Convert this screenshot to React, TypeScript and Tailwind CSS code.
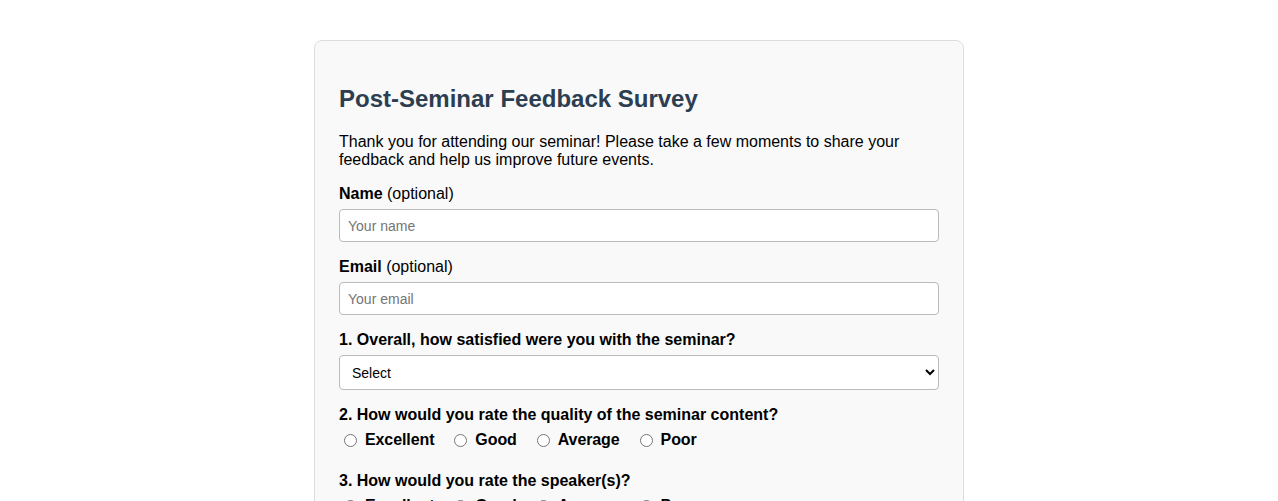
import React, { useState } from 'react';

const RATINGS = ['Excellent', 'Good', 'Average', 'Poor'];

const RadioRow: React.FC<{ name: string; value: string; onChange: (v: string) => void }> = ({ name, value, onChange }) => (
  <div className="flex items-center h-[18px] mt-[7px]">
    {RATINGS.map((r) => (
      <label key={r} className="flex items-center font-bold text-[16px] leading-[18px] mr-[15px] cursor-pointer tracking-[-0.1px]">
        <input
          type="radio"
          name={name}
          value={r}
          checked={value === r}
          onChange={() => onChange(r)}
          className="ml-[5px] mr-[8px] w-[13px] h-[13px]"
        />
        {r}
      </label>
    ))}
  </div>
);

const App: React.FC = () => {
  const [name, setName] = useState('');
  const [email, setEmail] = useState('');
  const [satisfaction, setSatisfaction] = useState('');
  const [content, setContent] = useState('');
  const [speaker, setSpeaker] = useState('');

  return (
    <div className="min-h-screen bg-white pt-[40px] text-[#000] font-['Liberation_Sans',Arial,sans-serif]">
      <div className="mx-auto w-[650px] bg-[#f9f9f9] border border-[#ddd] rounded-[8px] px-[24px] pt-[44px] pb-[24px]">
        <h2 className="text-[24px] leading-[28px] font-bold text-[#2c3e50]">Post-Seminar Feedback Survey</h2>

        <p className="mt-[20px] text-[16px] leading-[18px]">
          Thank you for attending our seminar! Please take a few moments to share your feedback and help us improve future events.
        </p>

        {/* Name */}
        <div className="mt-[16px]">
          <label className="block text-[16px] leading-[18px]">
            <span className="font-bold">Name</span> (optional)
          </label>
          <input
            type="text"
            value={name}
            onChange={(e) => setName(e.target.value)}
            placeholder="Your name"
            className="mt-[6px] block w-full h-[33px] px-[8px] text-[14px] bg-white border border-[#bbb] rounded-[4px] placeholder:text-[#757575]"
          />
        </div>

        {/* Email */}
        <div className="mt-[16px]">
          <label className="block text-[16px] leading-[18px]">
            <span className="font-bold">Email</span> (optional)
          </label>
          <input
            type="email"
            value={email}
            onChange={(e) => setEmail(e.target.value)}
            placeholder="Your email"
            className="mt-[6px] block w-full h-[33px] px-[8px] text-[14px] bg-white border border-[#bbb] rounded-[4px] placeholder:text-[#757575]"
          />
        </div>

        {/* Q1 */}
        <div className="mt-[16px]">
          <label className="block text-[16px] leading-[18px] font-bold">1. Overall, how satisfied were you with the seminar?</label>
          <select
            value={satisfaction}
            onChange={(e) => setSatisfaction(e.target.value)}
            className="mt-[6px] block w-full h-[35px] px-[8px] text-[14px] bg-white border border-[#bbb] rounded-[4px]"
          >
            <option value="">Select</option>
            <option value="5">Very satisfied</option>
            <option value="4">Satisfied</option>
            <option value="3">Neutral</option>
            <option value="2">Dissatisfied</option>
            <option value="1">Very dissatisfied</option>
          </select>
        </div>

        {/* Q2 */}
        <div className="mt-[16px]">
          <label className="block text-[16px] leading-[18px] font-bold">2. How would you rate the quality of the seminar content?</label>
          <RadioRow name="content" value={content} onChange={setContent} />
        </div>

        {/* Q3 */}
        <div className="mt-[23px]">
          <label className="block text-[16px] leading-[18px] font-bold">3. How would you rate the speaker(s)?</label>
          <RadioRow name="speaker" value={speaker} onChange={setSpeaker} />
        </div>

        <div className="h-[200px]" />
      </div>
    </div>
  );
};

export default App;
